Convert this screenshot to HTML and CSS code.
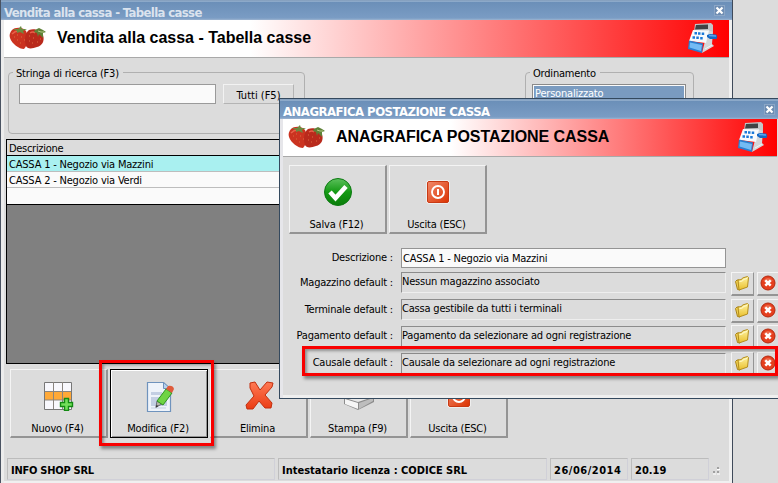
FILE: index.html
```html
<!DOCTYPE html>
<html lang="it">
<head>
    <meta charset="UTF-8">
    <title>Vendita alla cassa - Tabella casse</title>
    <link rel="stylesheet" href="styles.css">
</head>
<body>
    <!-- simboli condivisi -->
    <svg class="defs" width="0" height="0">
        <defs>
            <linearGradient id="gRed" x1="0" y1="0" x2="1" y2="1">
                <stop offset="0" stop-color="#f08a6c"/>
                <stop offset="1" stop-color="#dc3200"/>
            </linearGradient>
            <linearGradient id="gCross" x1="0" y1="0" x2="0" y2="1">
                <stop offset="0" stop-color="#ff7a55"/>
                <stop offset="1" stop-color="#ea3c14"/>
            </linearGradient>
            <linearGradient id="gGreen" x1="0" y1="0" x2="0" y2="1">
                <stop offset="0" stop-color="#5cc05c"/>
                <stop offset="0.5" stop-color="#149a14"/>
                <stop offset="1" stop-color="#0a7d0a"/>
            </linearGradient>
            <linearGradient id="gFolder" x1="0" y1="0" x2="0" y2="1">
                <stop offset="0" stop-color="#fff3a0"/>
                <stop offset="1" stop-color="#e9bf2c"/>
            </linearGradient>
        </defs>
        <symbol id="berries" viewBox="0 0 38 26">
            <path d="M3 5 C6 2 14 2 17 6 C20 12 19 20 15 24 C10 24 3 19 1 13 C0 10 1 7 3 5Z" fill="#cb3320"/>
            <path d="M20 5 C25 3 32 5 34 10 C36 16 33 21 28 22 C23 24 18 24 17 21 C15 15 16 8 20 5Z" fill="#b92a1c"/>
            <path d="M3 9 q3 -3 6 -3 M21 8 q3 -2 5 0" stroke="#e8614a" stroke-width="1.500" fill="none"/>
            <path d="M5 12h1M8 10h1M8 15h1M12 12h1M11 18h1M15 15h1M20 11h1M24 13h1M20 16h1M23 18h1M28 17h1M31 14h1" stroke="#dc6a40"/>
            <path d="M4 4 l5 0 l3 -3 l1 3 l5 0 l-4 2 l1 3 l-4 -2 l-3 1 l0 -2z" fill="#6c8a40"/>
            <path d="M26 5 l4 -2 l2 1 l2 1 l3 2 l-3 1 l0 5 l-4 -4 l-1 3 l-1 -4 l-3 -1z" fill="#5f8238"/>
            <path d="M29 6 l3 1 l3 0" stroke="#b3c986" fill="none"/>
        </symbol>
        <symbol id="register" viewBox="0 0 30 30">
            <path d="M7 1 L23 0 L25 2 L25 9 L6 9Z" fill="#c3c6c8"/>
            <path d="M8 2 L20 1.500 L20 6 L7 6.500Z" fill="#3f4345"/>
            <path d="M20 7 L25 9 L24 21 L26 23 L14 30 L17 18Z" fill="#d3d7da"/>
            <path d="M5 7 L21 7.500 L18 20 L1 18Z" fill="#f8fafc"/>
            <path d="M1 17.500 L15 20.500 L14 30 L0 26Z" fill="#2a7fd0"/>
            <path d="M2 19.500 L14 22 L13 28 L1.500 24.500Z" fill="#74bbf4"/>
            <path d="M6.500 10.300h2.500M10 10.500h2.500M13.700 10.700h2.500M4.500 14.500h2.500M8.300 14.800h2.500M12.200 15.200h2.500" stroke="#1a78d8" stroke-width="2.600"/>
            <path d="M19 12 L22 11 L28 11.500 Q30 13 28.500 16 L22 16 L19 14Z" fill="#1668c4"/>
            <path d="M21 12.500 L28 13" stroke="#5aa6ee" stroke-width="1.500" fill="none"/>
            <path d="M17 26 L24 22" stroke="#f2f4f6"/>
        </symbol>
        <symbol id="power" viewBox="0 0 24 24">
            <rect x="0.500" y="0.500" width="23" height="23" rx="2" fill="#fff"/>
            <rect x="1.500" y="1.500" width="21" height="21" rx="1.500" fill="url(#gRed)" stroke="#c83a14"/>
            <circle cx="12" cy="12" r="6" fill="none" stroke="#fff" stroke-width="1.900"/>
            <path d="M12 9v6" stroke="#fff" stroke-width="2"/>
        </symbol>
        <symbol id="folder" viewBox="0 0 16 16">
            <path d="M1.500 6.500 L3 5 L5 5 L6 15 L3.500 14.500Z" fill="#f0cf50" stroke="#a8821a"/>
            <path d="M4 5 L7.500 4.500 L8.500 3 L13.500 1.500 L14.500 2.500 L13.500 12 L5 15 Z" fill="url(#gFolder)" stroke="#b38d1c"/>
            <path d="M5.500 6.500 L8.500 6 L9.500 4.500 L13 3.500" stroke="#fffbd0" fill="none"/>
        </symbol>
        <symbol id="cancel" viewBox="0 0 16 16">
            <circle cx="8" cy="8" r="7" fill="#e53f1e" stroke="#b32a10"/>
            <path d="M3 6 Q8 0 13 6" fill="#f18a6c" opacity="0.600"/>
            <path d="M5.300 5.300l5.400 5.400M10.700 5.300l-5.400 5.400" stroke="#fff" stroke-width="2.500"/>
        </symbol>
        <symbol id="close" viewBox="0 0 11 11">
            <rect x="0.500" y="0.500" width="10" height="10" fill="#6d8cb2" stroke="#8ba6c6"/>
            <path d="M2.500 2.500l6 6M8.500 2.500l-6 6" stroke="#fff" stroke-width="2.200"/>
        </symbol>
    </svg>

    <div class="window main-window">
        <div class="titlebar inactive">
            <span class="caption">Vendita alla cassa - Tabella casse</span>
            <svg class="close"><use href="#close"/></svg>
        </div>
        <div class="banner">
            <svg class="berries"><use href="#berries"/></svg>
            <h1>Vendita alla cassa - Tabella casse</h1>
            <svg class="register"><use href="#register"/></svg>
        </div>

        <div class="filters">
            <div class="group search">
                <span class="legend">Stringa di ricerca (F3)</span>
                <input class="text" type="text">
                <button class="btn-small">Tutti (F5)</button>
            </div>
            <div class="group order">
                <span class="legend">Ordinamento</span>
                <div class="listbox"><div class="selected">Personalizzato</div></div>
            </div>
        </div>

        <div class="grid">
            <div class="grid-head">Descrizione</div>
            <div class="grid-row active">CASSA 1 - Negozio via Mazzini</div>
            <div class="grid-row">CASSA 2 - Negozio via Verdi</div>
            <div class="grid-row"></div>
        </div>

        <div class="toolbar">
            <button class="tool">
                <svg width="30" height="30" viewBox="0 0 30 30">
                    <path d="M0.500 1.500h27v27h-27z" fill="#f8f8fd" stroke="#777"/>
                    <path d="M1 10.500h26v8.500h-26z" fill="#ffa938"/>
                    <path d="M9.500 1v27M18.500 1v27M1 10.500h26M1 19h26" stroke="#8a8580"/>
                    <path d="M20.500 17.500h4v4h4v4h-4v4h-4v-4h-4v-4h4z" fill="#74df5c" stroke="#138a13" stroke-width="1.400"/>
                </svg>
                <span>Nuovo (F4)</span>
            </button>
            <button class="tool focused">
                <svg width="30" height="32" viewBox="0 0 30 32">
                    <path d="M2.500 1.500h16l7 7v22h-23z" fill="#eef3fa" stroke="#6f93bd" stroke-width="1.200"/>
                    <path d="M18.500 1.500v6h7z" fill="#b8d2ee" stroke="#6f93bd"/>
                    <path d="M6 11h11v3h-11zM6 16h16v9h-16z" fill="#c3cfe3"/>
                    <path d="M6 27h15" stroke="#c3cfe3"/>
                    <path d="M11 26l1-6 5 3z" fill="#b9b9a8" stroke="#667"/>
                    <path d="M12 20l9-12 6 4-9 12z" fill="#6fd444" stroke="#2d9420"/>
                    <path d="M21 8l2-3q5-1 6 3l-2 4z" fill="#df5b3b"/>
                    <path d="M10.500 27l1-3 2 1z" fill="#333"/>
                </svg>
                <span>Modifica (F2)</span>
            </button>
            <button class="tool">
                <svg width="29" height="30" viewBox="0 0 29 30">
                    <path d="M5 2 L10 1 L15 9 L22 1 L28 2 L27 6 L20 14 L27 22 L26 27 L20 27 L14 20 L8 28 L2 28 L1 24 L9 15 L5 7Z" fill="url(#gCross)" stroke="#c22f0e" stroke-linejoin="round"/>
                </svg>
                <span>Elimina</span>
            </button>
            <button class="tool">
                <svg width="30" height="30" viewBox="0 0 30 30">
                    <path d="M0 15 L14 8 L30 14 L30 21 L14 29 L0 23Z" fill="#8c8c8c"/>
                    <path d="M1 18 L14 22 L14 28 L1 23Z" fill="#f6f6f6"/>
                    <path d="M15 22 L29 17 L29 20 L15 28Z" fill="#bdbdbd"/>
                    <path d="M1 17 L14 11 L29 16 L14 21Z" fill="#e8e8e8"/>
                </svg>
                <span>Stampa (F9)</span>
            </button>
            <button class="tool">
                <svg width="24" height="24"><use href="#power"/></svg>
                <span>Uscita (ESC)</span>
            </button>
        </div>

        <div class="statusbar">
            <div class="panel company">INFO SHOP SRL</div>
            <div class="panel licence">Intestatario licenza : CODICE SRL</div>
            <div class="panel date">26/06/2014</div>
            <div class="panel time">20.19</div>
            <svg class="grip" width="8" height="8"><path d="M5 1h2M1 5h2M5 5h2" stroke="#a0a0a0" stroke-width="2"/><path d="M5 2.500h3M1 7h3M5 7h3" stroke="#fff"/></svg>
        </div>
    </div>

    <div class="window dialog">
        <div class="titlebar">
            <span class="caption">ANAGRAFICA POSTAZIONE CASSA</span>
            <svg class="close"><use href="#close"/></svg>
        </div>
        <div class="banner">
            <svg class="berries"><use href="#berries"/></svg>
            <h1>ANAGRAFICA POSTAZIONE CASSA</h1>
            <svg class="register"><use href="#register"/></svg>
        </div>
        <div class="toolbar">
            <button class="tool">
                <svg width="30" height="30" viewBox="0 0 30 30">
                    <circle cx="15" cy="15" r="13.500" fill="url(#gGreen)" stroke="#0c7a12"/>
                    <path d="M7 15l5.500 6L23 9.500" stroke="#fff" stroke-width="4.600" fill="none"/>
                </svg>
                <span>Salva (F12)</span>
            </button>
            <button class="tool">
                <svg width="24" height="24"><use href="#power"/></svg>
                <span>Uscita (ESC)</span>
            </button>
        </div>
        <div class="form">
            <div class="field">
                <label>Descrizione :</label>
                <div class="edit">CASSA 1 - Negozio via Mazzini</div>
            </div>
            <div class="field">
                <label>Magazzino default :</label>
                <div class="readonly">Nessun magazzino associato</div>
                <button class="pick"><svg><use href="#folder"/></svg></button>
                <button class="pick"><svg><use href="#cancel"/></svg></button>
            </div>
            <div class="field">
                <label>Terminale default :</label>
                <div class="readonly">Cassa gestibile da tutti i terminali</div>
                <button class="pick"><svg><use href="#folder"/></svg></button>
                <button class="pick"><svg><use href="#cancel"/></svg></button>
            </div>
            <div class="field raised">
                <label>Pagamento default :</label>
                <div class="readonly">Pagamento da selezionare ad ogni registrazione</div>
                <button class="pick"><svg><use href="#folder"/></svg></button>
                <button class="pick"><svg><use href="#cancel"/></svg></button>
            </div>
            <div class="field raised">
                <label>Causale default :</label>
                <div class="readonly">Causale da selezionare ad ogni registrazione</div>
                <button class="pick"><svg><use href="#folder"/></svg></button>
                <button class="pick"><svg><use href="#cancel"/></svg></button>
            </div>
        </div>
    </div>

    <div class="mark mark-edit"></div>
    <div class="mark mark-causale"></div>
</body>
</html>
```
FILE: styles.css
```css
* {
    box-sizing: border-box;
}
body {
    margin: 0;
    width: 778px;
    height: 483px;
    position: relative;
    overflow: hidden;
    background: #dcdcdc;
    color: #000;
    font-family: "DejaVu Sans Condensed", "DejaVu Sans", sans-serif;
    font-stretch: condensed;
    font-size: 11px;
    letter-spacing: -0.2px;
    white-space: nowrap;
}
.defs {
    position: absolute;
}
button, input {
    font: inherit;
    letter-spacing: inherit;
    color: inherit;
    margin: 0;
    padding: 0;
    border-radius: 0;
}
svg {
    display: block;
}

/* finestre */
.window {
    position: absolute;
    background: #dcdcdc;
    display: flex;
    flex-direction: column;
}
.main-window {
    left: 0;
    top: 0;
    width: 733px;
    height: 483px;
    border-left: 1px solid #4a5362;
    border-right: 1px solid #3f4a5a;
    box-shadow: inset 3px 0 #ececec, inset -3px 0 #f0f0f0, inset 0 -2px #f0f0f0;
    padding: 0 3px;
}
.dialog {
    left: 279px;
    top: 98px;
    width: 502px;
    height: 301px;
    border: 1px solid #34495e;
    box-shadow: inset 3px 0 #e6e6ea, inset 0 -3px #efefef;
    padding: 0 3px;
}
.titlebar {
    flex: none;
    display: flex;
    justify-content: space-between;
    height: 20px;
    margin: 0 -3px;
    padding: 1px 7px 0 3px;
    background: linear-gradient(#5f7fa5 0, #adc3da 1px, #6b8fb8 2px, #7a9cc4 18px, #9db4d0 20px);
    color: #fff;
    font-size: 13px;
    font-weight: bold;
    line-height: 23px;
    letter-spacing: -0.5px;
}
.inactive {
    color: #dbe3ee;
    letter-spacing: -0.63px;
}
.close {
    width: 11px;
    height: 11px;
    margin-top: 4px;
}
.banner {
    flex: none;
    display: flex;
    align-items: center;
    height: 38px;
    border-bottom: 1px solid #a9a9a9;
    background: linear-gradient(90deg, #fff 0, #fff 34%, #ff0000 100%);
}
.banner h1 {
    margin: 0 auto 1px 10px;
    font: bold 16px "Liberation Sans", Arial, sans-serif;
    letter-spacing: 0;
}
.berries {
    width: 38px;
    height: 26px;
    margin: 0 0 1px 5px;
}
.register {
    width: 30px;
    height: 30px;
    margin: 0 11px 2px 0;
}

/* filtri */
.filters {
    flex: none;
    display: flex;
    justify-content: space-between;
    height: 81px;
    padding: 14px 35px 0 4px;
}
.group {
    position: relative;
    height: 62px;
    border: 1px solid #b0b0b0;
    border-radius: 4px;
}
.legend {
    position: absolute;
    left: 4px;
    top: -6px;
    padding: 0 4px 0 3px;
    background: #dcdcdc;
    line-height: 14px;
}
.search {
    width: 297px;
    display: flex;
    align-items: flex-start;
    gap: 7px;
    padding: 11px 10px;
}
.text {
    width: 197px;
    height: 20px;
    border: 1px solid #9a9a9a;
    background: #fafafa;
}
.btn-small {
    width: 71px;
    height: 20px;
    border: 1px solid #f2f2f2;
    border-right-color: #b4b4b4;
    border-bottom-color: #b4b4b4;
    background: #dcdcdc;
    letter-spacing: 0;
    padding-top: 2px;
}
.order {
    width: 169px;
    padding: 11px 7px 0 6px;
}
.listbox {
    height: 46px;
    padding: 1px;
    border: 1px solid #8a8a8a;
    background: #fafafa;
}
.selected {
    background: #7a9bc0;
    color: #fff;
    line-height: 15px;
    padding-left: 1px;
}

/* tabella */
.grid {
    flex: none;
    height: 225px;
    margin-left: 2px;
    border: 1px solid #000;
    background: #808080;
}
.grid-head, .grid-row {
    height: 16px;
    padding-left: 2px;
    line-height: 17px;
    background: #fafafa;
    border-bottom: 1px solid #bdbdbd;
}
.grid-head {
    background: #dcdcdc;
    border-color: #000;
    letter-spacing: -0.3px;
}
.grid-row.active {
    background: #a9f0f0;
}
.grid-row:last-child {
    height: 17px;
    border-color: #000;
}

/* pulsanti */
.toolbar {
    flex: none;
    display: flex;
    gap: 2px;
    padding: 5px 0 0 6px;
}
.tool {
    width: 98px;
    height: 69px;
    display: flex;
    flex-direction: column;
    align-items: center;
    justify-content: space-between;
    padding: 11px 2px 1px 0;
    border: 1px solid #f4f4f4;
    border-right: 2px solid #949494;
    border-bottom: 2px solid #949494;
    background: #dcdcdc;
    line-height: 13px;
}
.tool svg {
    margin-left: 3px;
}
.tool svg[width="24"] {
    margin-top: 3px;
}
.focused {
    border: 1px solid #000;
    box-shadow: inset 1px 1px #fff, inset -1px -1px #949494;
    padding-bottom: 2px;
}
.statusbar {
    display: flex;
    gap: 3px;
    margin-top: 20px;
    padding-left: 3px;
    height: 22px;
    font-weight: bold;
    line-height: 23px;
}
.panel {
    border: 1px solid #bcbcbc;
    border-right-color: #d0d0d8;
    border-bottom-color: #d0d0d8;
    padding-left: 3px;
    letter-spacing: -0.25px;
}
.company {
    width: 268px;
}
.licence {
    width: 269px;
    letter-spacing: 0;
}
.date {
    width: 78px;
    letter-spacing: 0.5px;
}
.time {
    width: 78px;
    letter-spacing: 0;
}
.grip {
    margin-top: 9px;
}

/* dialogo */
.dialog .titlebar {
    padding-right: 5px;
}
.dialog .banner h1 {
    letter-spacing: -0.05px;
}
.dialog .toolbar {
    padding-top: 8px;
}
.dialog .register {
    margin-right: 9px;
}
.form {
    padding: 14px 0 0 4px;
}
.field {
    display: flex;
    height: 27px;
}
.field:first-child {
    height: 24px;
}
.field label {
    flex: none;
    width: 106px;
    margin-right: 8px;
    text-align: right;
    line-height: 21px;
}
.field:first-child label {
    line-height: 19px;
}
.edit, .readonly {
    flex: none;
    width: 325px;
    height: 20px;
    padding-left: 1px;
    margin-right: 5px;
    line-height: 19px;
}
.edit {
    border: 1px solid #949494;
    background: #fafafa;
}
.readonly {
    height: 21px;
    padding: 0;
    line-height: 18px;
    border: 1px solid #8c8c8c;
    border-right-color: #eee;
    border-bottom-color: #eee;
}
.pick {
    flex: none;
    width: 23px;
    height: 24px;
    margin-right: 3px;
    padding: 0 2px 2px;
    border: 1px solid #f4f4f4;
    border-right-color: #949494;
    border-bottom: 2px solid #949494;
    background: #dcdcdc;
}
.raised .pick {
    margin-top: -1px;
}
.raised label {
    line-height: 19px;
}
.pick svg {
    width: 16px;
    height: 16px;
}

/* riquadri rossi di evidenza */
.mark {
    position: absolute;
    border: 3px solid #f80000;
    box-shadow: 2px 3px 3px rgba(0, 0, 0, 0.4), inset 2px 2px 3px rgba(0, 0, 0, 0.35);
}
.mark-edit {
    left: 99px;
    top: 360px;
    width: 115px;
    height: 86px;
}
.mark-causale {
    left: 302px;
    top: 346px;
    width: 476px;
    height: 30px;
}
```
